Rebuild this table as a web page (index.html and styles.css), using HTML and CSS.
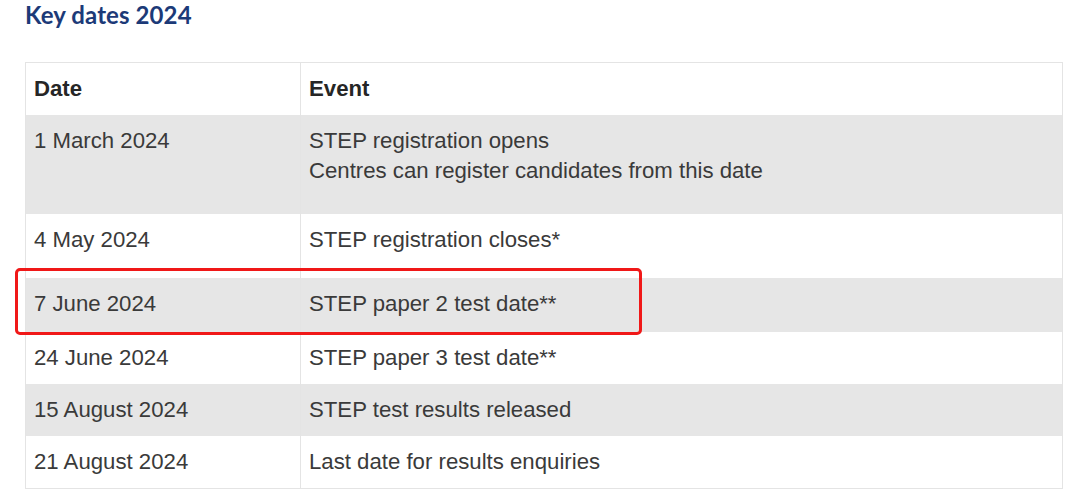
FILE: index.html
```html
<!DOCTYPE html>
<html lang="en">
<head>
<meta charset="utf-8">
<title>Key dates 2024</title>
<link rel="stylesheet" href="styles.css">
</head>
<body>
<main class="page">
  <h2 class="title">Key dates 2024</h2>
  <div class="table-wrap">
    <table class="dates">
      <thead>
        <tr>
          <th class="col-date">Date</th>
          <th>Event</th>
        </tr>
      </thead>
      <tbody>
        <tr class="shade r-open">
          <td>1 March 2024</td>
          <td>STEP registration opens<br>Centres can register candidates from this date</td>
        </tr>
        <tr class="r-close">
          <td>4 May 2024</td>
          <td>STEP registration closes*</td>
        </tr>
        <tr class="shade r-paper2">
          <td>7 June 2024</td>
          <td>STEP paper 2 test date**</td>
        </tr>
        <tr>
          <td>24 June 2024</td>
          <td>STEP paper 3 test date**</td>
        </tr>
        <tr class="shade">
          <td>15 August 2024</td>
          <td>STEP test results released</td>
        </tr>
        <tr>
          <td>21 August 2024</td>
          <td>Last date for results enquiries</td>
        </tr>
      </tbody>
    </table>
    <div class="highlight" aria-hidden="true"></div>
  </div>
</main>
</body>
</html>
```

FILE: styles.css
```css
html, body {
  margin: 0;
  padding: 0;
  background: #ffffff;
}

.page {
  padding: 0 17px 0 25px;
}

.title {
  margin: 0;
  padding: 0;
  font-family: "Lato", "Open Sans", sans-serif;
  font-weight: 700;
  font-size: 24px;
  line-height: 30px;
  color: #1c3a78;
  letter-spacing: 0.1px;
}

.table-wrap {
  position: relative;
  margin-top: 32px;
}

.dates {
  width: 1038px;
  border-collapse: collapse;
  border: 1px solid #e4e4e4;
  font-family: "Liberation Sans", Arial, sans-serif;
  font-size: 22.2px;
  line-height: 30px;
  color: #3a3a3a;
}

.dates th,
.dates td {
  text-align: left;
  vertical-align: top;
  padding: 11px 8px 11px 8px;
  border-left: 1px solid #e4e4e4;
}

.dates th {
  font-weight: 700;
  color: #262626;
}

.dates .col-date {
  width: 258px;
}

.shade {
  background: #e6e6e6;
}

.r-open td {
  padding-bottom: 28px;
}

.r-close td {
  padding-bottom: 23px;
}

.r-paper2 td {
  padding-bottom: 13px;
}

.highlight {
  position: absolute;
  left: -10px;
  top: 206px;
  width: 621px;
  height: 61px;
  border: 3px solid #f01818;
  border-radius: 5px;
  pointer-events: none;
}
```
